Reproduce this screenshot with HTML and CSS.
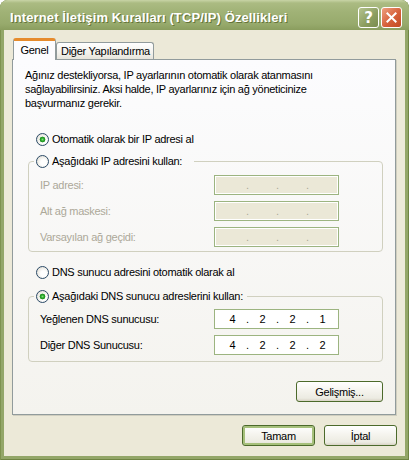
FILE: index.html
```html
<!DOCTYPE html>
<html lang="tr">
<head>
    <meta charset="UTF-8">
    <title>Internet İletişim Kuralları (TCP/IP) Özellikleri</title>
    <link rel="stylesheet" href="styles.css">
</head>
<body>
    <div class="window">
        <div class="titlebar">
            <span class="title">Internet İletişim Kuralları (TCP/IP) Özellikleri</span>
            <div class="capButtons">
                <button class="capBtn help">?</button>
                <button class="capBtn close">
                    <svg width="21" height="21" viewBox="0 0 21 21">
                        <path d="M6 6 L15 15 M15 6 L6 15" stroke="#fff" stroke-width="2.2" stroke-linecap="square" fill="none" />
                    </svg>
                </button>
            </div>
        </div>

        <div class="client">
            <div class="tabs">
                <div class="tab active">Genel</div>
                <div class="tab">Diğer Yapılandırma</div>
            </div>

            <div class="panel">
                <p class="intro">Ağınız destekliyorsa, IP ayarlarının otomatik olarak atanmasını<br>sağlayabilirsiniz. Aksi halde, IP ayarlarınız için ağ yöneticinize<br>başvurmanız gerekir.</p>

                <label class="radio first"><input type="radio" name="ip" checked>Otomatik olarak bir IP adresi al</label>

                <!-- Manual IP -->
                <fieldset class="group ipGroup">
                    <legend class="wideLegend"><label class="radio"><input type="radio" name="ip">Aşağıdaki IP adresini kullan:</label></legend>
                    <div class="field disabled">
                        <span class="fieldLabel">IP adresi:</span>
                        <div class="ipBox"><span></span><i>.</i><span></span><i>.</i><span></span><i>.</i><span></span></div>
                    </div>
                    <div class="field disabled">
                        <span class="fieldLabel">Alt ağ maskesi:</span>
                        <div class="ipBox"><span></span><i>.</i><span></span><i>.</i><span></span><i>.</i><span></span></div>
                    </div>
                    <div class="field disabled">
                        <span class="fieldLabel">Varsayılan ağ geçidi:</span>
                        <div class="ipBox"><span></span><i>.</i><span></span><i>.</i><span></span><i>.</i><span></span></div>
                    </div>
                </fieldset>

                <label class="radio dnsAuto"><input type="radio" name="dns">DNS sunucu adresini otomatik olarak al</label>

                <!-- Manual DNS -->
                <fieldset class="group dnsGroup">
                    <legend><label class="radio"><input type="radio" name="dns" checked>Aşağıdaki DNS sunucu adreslerini kullan:</label></legend>
                    <div class="field">
                        <span class="fieldLabel">Yeğlenen DNS sunucusu:</span>
                        <div class="ipBox"><span>4</span><i>.</i><span>2</span><i>.</i><span>2</span><i>.</i><span>1</span></div>
                    </div>
                    <div class="field">
                        <span class="fieldLabel">Diğer DNS Sunucusu:</span>
                        <div class="ipBox"><span>4</span><i>.</i><span>2</span><i>.</i><span>2</span><i>.</i><span>2</span></div>
                    </div>
                </fieldset>

                <div class="advRow">
                    <button class="btn advBtn">Gelişmiş...</button>
                </div>
            </div>

            <div class="dialogButtons">
                <button class="btn default">Tamam</button>
                <button class="btn">İptal</button>
            </div>
        </div>
    </div>
</body>
</html>
```

FILE: styles.css
```css
* {
    box-sizing: border-box;
}

body {
    margin: 0;
    background-color: white;
    font-family: 'Liberation Sans', Arial, sans-serif;
    font-size: 11px;
    letter-spacing: -0.27px;
    color: black;
}

.window {
    width: 409px;
    height: 460px;
    display: flex;
    flex-direction: column;
    background-color: #93a668;
    border-radius: 8px 8px 0 0;
    overflow: hidden;
    box-shadow: inset 1px 0 #7e924f, inset -1px 0 #6f8443, inset 0 -1px #6f8443;
}

.titlebar {
    height: 30px;
    flex: none;
    display: flex;
    align-items: center;
    justify-content: space-between;
    padding: 5px 7px 0 10px;
    background: linear-gradient(#c8d4a6 0, #abbb82 3px, #a0b276 40%, #97aa6c 80%, #8a9d5e 100%);
}

.title {
    font-family: 'Liberation Sans', Arial, sans-serif;
    font-weight: bold;
    font-size: 13px;
    letter-spacing: 0.12px;
    color: white;
    text-shadow: 1px 1px 0 #65753a;
}

.capButtons {
    display: flex;
    gap: 2px;
}

.capBtn {
    width: 21px;
    height: 21px;
    padding: 0;
    border: 1px solid white;
    border-radius: 3px;
    display: flex;
    align-items: center;
    justify-content: center;
}

.help {
    background: linear-gradient(135deg, #b4c38e, #8b9d5f 60%, #7a8c4e);
    color: white;
    font-family: 'DejaVu Sans', sans-serif;
    font-weight: bold;
    font-size: 15px;
    letter-spacing: 0;
}

.close {
    background: linear-gradient(135deg, #eea080, #d6603a 55%, #c24a22);
}

.client {
    flex: 1;
    margin: 0 4px 4px;
    background-color: #ece9d8;
    display: flex;
    flex-direction: column;
}

/* tabs */

.tabs {
    display: flex;
    align-items: flex-end;
    margin: 8px 0 -1px 9px;
    position: relative;
    z-index: 1;
}

.tab {
    height: 17px;
    margin-bottom: 1px;
    padding: 0 3px 0 4px;
    display: flex;
    align-items: center;
    border: 1px solid #919b9c;
    border-bottom: none;
    border-radius: 3px 3px 0 0;
    background: linear-gradient(#ffffff, #f3f2ed 60%, #e6e4db);
}

.tab.active {
    height: 22px;
    margin-bottom: 0;
    width: 43px;
    justify-content: center;
    padding: 0 0 2px;
    border-top: 3px solid #e68b2c;
    background: #fcfcfe;
}

.panel {
    margin: 0 9px 0 8px;
    padding: 0 12px 12px;
    border: 1px solid #919b9c;
    background: linear-gradient(#fcfcfe, #f4f3ee);
    box-shadow: 1px 1px 0 #d0cebf;
}

.intro {
    margin: 8px 0 0;
    line-height: 14px;
}

/* radios */

.radio {
    display: flex;
    align-items: center;
    gap: 3px;
    height: 16px;
}

.radio input {
    appearance: none;
    -webkit-appearance: none;
    width: 13px;
    height: 13px;
    margin: 0;
    border: 1px solid #2b4a67;
    border-radius: 50%;
    background: radial-gradient(circle at 60% 60%, #ffffff 30%, #e6e4dc 75%, #d4d1c3 100%);
}

.radio input:checked {
    background:
        radial-gradient(circle, #7ede7e 0, #2eaa2e 1.5px, #1d8f1d 2.6px, transparent 3.2px),
        radial-gradient(circle at 60% 60%, #ffffff 30%, #e6e4dc 75%, #d4d1c3 100%);
}

.radio.first {
    margin: 21px 0 0 11px;
}

.radio.dnsAuto {
    margin: 12px 0 0 11px;
}

/* group boxes */

.group {
    margin: 6px 0 0 3px;
    padding: 6px 0 4px 5px;
    border: 1px solid #d0d0bf;
    border-radius: 4px;
    display: flex;
    flex-direction: column;
    gap: 6px;
}

.group legend {
    padding: 0 4px 0 2px;
}

.group .wideLegend {
    padding-right: 12px;
}

.dnsGroup {
    margin-top: 8px;
    padding-top: 5px;
    padding-bottom: 6px;
}

.field {
    display: flex;
    align-items: center;
    padding-left: 6px;
    height: 20px;
}

.fieldLabel {
    width: 174px;
}

.ipBox {
    width: 125px;
    height: 20px;
    display: flex;
    align-items: center;
    padding-left: 4px;
    border: 1px solid #9cb480;
    background-color: white;
}

.ipBox span {
    width: 27px;
    text-align: center;
}

.ipBox i {
    width: 3px;
    font-style: normal;
    text-align: center;
}

.field.disabled {
    color: #aca899;
}

.field.disabled .ipBox {
    background-color: #ebe8d7;
    box-shadow: inset 0 0 0 1px #ffffff;
}

/* buttons */

.btn {
    font-family: 'Liberation Sans', Arial, sans-serif;
    font-size: 11px;
    letter-spacing: -0.27px;
    color: black;
    height: 21px;
    width: 73px;
    padding: 0;
    border: 1px solid #4c6a2b;
    border-radius: 3px;
    background: linear-gradient(#ffffff, #f5f4ee 45%, #ecebe2 85%, #d9d4c6);
}

.btn.default {
    box-shadow: inset 0 0 0 2px #a6c07b;
}

.advRow {
    display: flex;
    justify-content: flex-end;
    margin-top: 19px;
}

.advBtn {
    width: 87px;
}

.dialogButtons {
    display: flex;
    justify-content: flex-end;
    gap: 9px;
    margin: 10px 8px 0 0;
}
```
